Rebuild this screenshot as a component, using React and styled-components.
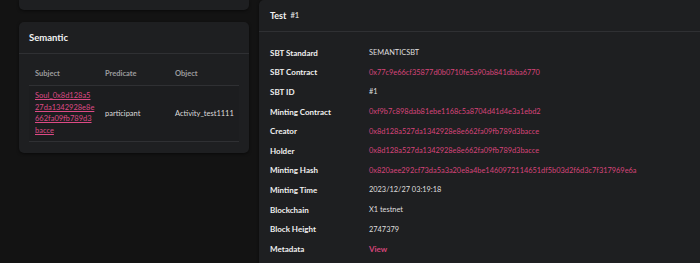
import React from 'react';
import styled, { createGlobalStyle } from 'styled-components';

const GlobalStyle = createGlobalStyle`
  html, body {
    margin: 0;
    padding: 0;
    background: #131313;
    font-family: Lato, "Noto Sans", sans-serif;
    -webkit-font-smoothing: antialiased;
  }
`;

const Page = styled.div`
  display: flex;
  align-items: flex-start;
  width: 700px;
  height: 263px;
  overflow: hidden;
  background: #131313;
`;

const LeftColumn = styled.div`
  display: flex;
  flex-direction: column;
  gap: 12px;
  width: 230px;
  margin-left: 19px;
`;

const Card = styled.div`
  background: #1e1f21;
  border-radius: 5px;
  box-shadow: 0 1px 3px rgba(0, 0, 0, 0.5);
`;

const StubCard = styled(Card)`
  height: 10px;
  border-top-left-radius: 0;
  border-top-right-radius: 0;
`;

const CardHeader = styled.div`
  display: flex;
  align-items: center;
  gap: 4px;
  height: ${p => p.h || 31}px;
  padding: 0 ${p => p.px || 10}px;
  border-bottom: 1px solid #2f3033;
  color: #f2f2f2;
  font-weight: 700;
  font-size: ${p => p.size || 9.5}px;
`;

const Sub = styled.span`
  font-size: 7.5px;
  font-weight: 700;
  color: #cfcfcf;
`;

const TableWrap = styled.div`
  padding: 0 10px 11px;
`;

const Table = styled.table`
  width: 100%;
  border-collapse: collapse;
  font-size: 7.5px;
`;

const Th = styled.th`
  text-align: left;
  font-weight: 700;
  color: #9c9c9e;
  padding: 14px 0 6px 6px;
  height: 11px;
  border-bottom: 1px solid #2f3033;
  width: ${p => (p.w ? `${p.w}px` : 'auto')};
`;

const Td = styled.td`
  color: #dcdcdc;
  padding: 4px 0 4px 6px;
  line-height: 11.7px;
  vertical-align: middle;
  border-bottom: 1px solid #2f3033;
  background: #1c1d1f;
  white-space: nowrap;
`;

const SubjectLink = styled.a`
  color: #dd4a85;
  text-decoration: underline;
  display: block;
`;

const Panel = styled(Card)`
  flex: 1;
  margin-left: 10px;
  height: 275px;
  border-top-right-radius: 0;
`;

const DetailList = styled.div`
  display: flex;
  flex-direction: column;
  padding: 11px 0 0 11px;
`;

const DetailRow = styled.div`
  display: flex;
  align-items: center;
  height: 19.6px;
  font-size: 7.4px;
`;

const Label = styled.div`
  width: 99px;
  flex-shrink: 0;
  font-weight: 700;
  font-size: 8px;
  color: #f0f0f0;
`;

const Value = styled.div`
  color: ${p => (p.link ? '#d64479' : '#dedede')};
  font-weight: ${p => (p.bold ? 700 : 400)};
  font-size: ${p => (p.bold ? 8 : 7.4)}px;
  white-space: nowrap;
`;

const details = [
  ['SBT Standard', 'SEMANTICSBT'],
  ['SBT Contract', '0x77c9e66cf35877d0b0710fe5a90ab841dbba6770', true],
  ['SBT ID', '#1'],
  ['Minting Contract', '0xf9b7c898dab81ebe1168c5a8704d41d4e3a1ebd2', true],
  ['Creator', '0x8d128a527da1342928e8e662fa09fb789d3bacce', true],
  ['Holder', '0x8d128a527da1342928e8e662fa09fb789d3bacce', true],
  ['Minting Hash', '0x820aee292cf73da5a3a20e8a4be1460972114651df5b03d2f6d3c7f317969e6a', true],
  ['Minting Time', '2023/12/27 03:19:18'],
  ['Blockchain', 'X1 testnet'],
  ['Block Height', '2747379'],
  ['Metadata', 'View', true, true],
];

const subject = 'Soul_0x8d128a527da1342928e8e662fa09fb789d3bacce';
const subjectLines = subject.match(/.{1,14}/g);

export default function App() {
  return (
    <Page>
      <GlobalStyle />
      <LeftColumn>
        <StubCard />
        <Card>
          <CardHeader>Semantic</CardHeader>
          <TableWrap>
            <Table>
              <thead>
                <tr>
                  <Th w={64}>Subject</Th>
                  <Th w={64}>Predicate</Th>
                  <Th>Object</Th>
                </tr>
              </thead>
              <tbody>
                <tr>
                  <Td>
                    {subjectLines.map(line => (
                      <SubjectLink href="#" key={line}>{line}</SubjectLink>
                    ))}
                  </Td>
                  <Td>participant</Td>
                  <Td>Activity_test1111</Td>
                </tr>
              </tbody>
            </Table>
          </TableWrap>
        </Card>
      </LeftColumn>
      <Panel>
        <CardHeader h={31} px={11} size={9}>
          Test <Sub>#1</Sub>
        </CardHeader>
        <DetailList>
          {details.map(([label, value, link, bold]) => (
            <DetailRow key={label}>
              <Label>{label}</Label>
              <Value link={link} bold={bold}>{value}</Value>
            </DetailRow>
          ))}
        </DetailList>
      </Panel>
    </Page>
  );
}
